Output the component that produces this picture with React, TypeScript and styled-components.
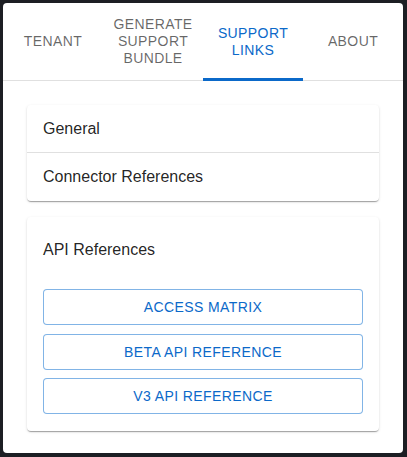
import React, { useState } from "react";
import styled, { createGlobalStyle } from "styled-components";

const Global = createGlobalStyle`
  html, body { margin: 0; padding: 0; background: #1c1e23; }
  body { font-family: "Liberation Sans", Arial, sans-serif; }
  * { box-sizing: border-box; }
`;

const Frame = styled.div`
  padding: 3px 4px 4px 3px;
  width: 407px;
  height: 457px;
`;

const Window = styled.div`
  width: 400px;
  height: 450px;
  background: #fff;
  border-radius: 4px;
  display: flex;
  flex-direction: column;
  overflow: hidden;
`;

const TabBar = styled.div`
  display: grid;
  grid-template-columns: repeat(4, 100px);
  border-bottom: 1px solid #e0e0e0;
`;

const Tab = styled.div<{ $active?: boolean }>`
  position: relative;
  display: flex;
  align-items: center;
  justify-content: center;
  text-align: center;
  padding: 13px 8px;
  font-size: 14px;
  line-height: 17px;
  letter-spacing: 0.4px;
  text-transform: uppercase;
  color: ${(p) => (p.$active ? "#0b69c9" : "rgba(0,0,0,0.6)")};
  cursor: pointer;
`;

const Indicator = styled.span`
  position: absolute;
  left: 0;
  right: 0;
  bottom: -1px;
  height: 3px;
  background: #0b69c9;
`;

const Content = styled.div`
  padding: 24px 24px 0 24px;
  display: flex;
  flex-direction: column;
  gap: 16px;
`;

const Card = styled.div`
  background: #fff;
  border-radius: 4px;
  box-shadow: 0px 2px 1px -1px rgba(0,0,0,0.2), 0px 1px 1px 0px rgba(0,0,0,0.14),
    0px 1px 3px 0px rgba(0,0,0,0.12);
`;

const Row = styled.div<{ $divider?: boolean }>`
  height: 48px;
  display: flex;
  align-items: center;
  padding: 0 16px;
  font-size: 16px;
  color: rgba(0,0,0,0.87);
  border-bottom: ${(p) => (p.$divider ? "1px solid #e0e0e0" : "none")};
`;

const CardBody = styled.div`
  padding: 21px 16px 17px 16px;
`;

const Title = styled.div`
  font-size: 16px;
  line-height: 24px;
  color: rgba(0,0,0,0.87);
  margin-bottom: 27px;
`;

const ButtonStack = styled.div`
  display: flex;
  flex-direction: column;
  gap: 8.5px;
`;

const OutlineButton = styled.button`
  height: 36px;
  width: 100%;
  border: 1px solid rgba(25,118,210,0.55);
  border-radius: 4px;
  background: #fff;
  color: #0b69c9;
  font-family: "Liberation Sans", Arial, sans-serif;
  font-size: 14px;
  letter-spacing: 0.4px;
  text-transform: uppercase;
  cursor: pointer;
`;

const tabs = ["Tenant", "Generate Support Bundle", "Support Links", "About"];

export default function App() {
  const [active, setActive] = useState(2);
  return (
    <>
      <Global />
      <Frame>
        <Window>
          <TabBar>
            {tabs.map((t, i) => (
              <Tab key={t} $active={i === active} onClick={() => setActive(i)}>
                {t}
                {i === active && <Indicator />}
              </Tab>
            ))}
          </TabBar>
          <Content>
            <Card>
              <Row $divider>General</Row>
              <Row>Connector References</Row>
            </Card>
            <Card>
              <CardBody>
                <Title>API References</Title>
                <ButtonStack>
                  <OutlineButton>Access Matrix</OutlineButton>
                  <OutlineButton>Beta API Reference</OutlineButton>
                  <OutlineButton>V3 API Reference</OutlineButton>
                </ButtonStack>
              </CardBody>
            </Card>
          </Content>
        </Window>
      </Frame>
    </>
  );
}
